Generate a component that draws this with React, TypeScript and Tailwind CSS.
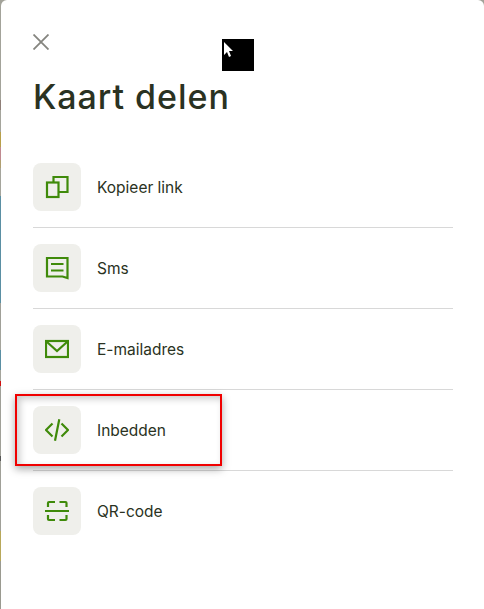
import React from "react";

const G = "#3f8a0a";

const strip: [number, string][] = [
  [100, "#a3a39a"], [10, "#8f7f78"], [22, "#a5a59c"], [15, "#b8a04a"], [13, "#c08a90"], [8, "#b09f70"], [28, "#a5a59c"],
  [107, "#5a8fa3"], [27, "#a0a098"], [20, "#a5a59c"], [20, "#5a8fa3"], [11, "#a5a59c"], [5, "#d01010"], [70, "#a0a098"],
  [5, "#555555"], [70, "#a0a098"], [30, "#b8a85a"], [48, "#9a9a90"],
];

const CopyIcon = () => (
  <svg width="24" height="24" viewBox="0 0 24 24" fill="none" stroke={G} strokeWidth="2.200">
    <rect x="2" y="7.500" width="11.500" height="14.500" />
    <path d="M8.500 7V2H22.500v15h-9" />
  </svg>
);
const SmsIcon = () => (
  <svg width="24" height="24" viewBox="0 0 24 24" fill="none" stroke={G} strokeWidth="2.200">
    <path d="M2 2h20.500v20l-5-1.500H2z" />
    <path d="M6 8h12.500M6 14.500h12.500" />
  </svg>
);
const MailIcon = () => (
  <svg width="24" height="24" viewBox="0 0 24 24" fill="none" stroke={G} strokeWidth="2.200">
    <rect x="1" y="4" width="22" height="16" />
    <path d="M2 5l10 9 10-9" />
  </svg>
);
const CodeIcon = () => (
  <svg width="24" height="24" viewBox="0 0 24 24" fill="none" stroke={G} strokeWidth="2.200">
    <path d="M7.500 5.500L1 12l6.500 6.500M16.500 5.500L23 12l-6.500 6.500M14.300 1.300L10 22.700" />
  </svg>
);
const QrIcon = () => (
  <svg width="24" height="24" viewBox="0 0 24 24" fill="none" stroke={G} strokeWidth="2.200">
    <path d="M3 8V4a1 1 0 0 1 1-1H10M14.500 3H20.500a1 1 0 0 1 1 1V8M0 12h24M3 16v4a1 1 0 0 0 1 1H10M14.500 21H20.500a1 1 0 0 0 1-1V16" />
  </svg>
);

const rows: [string, React.ReactNode][] = [
  ["Kopieer link", <CopyIcon />],
  ["Sms", <SmsIcon />],
  ["E-mailadres", <MailIcon />],
  ["Inbedden", <CodeIcon />],
  ["QR-code", <QrIcon />],
];

export default function App() {
  return (
    <div className="relative flex h-[609px] w-[484px] overflow-hidden bg-[#a3a39a] font-['Inter',sans-serif]">
      <div className="flex w-px flex-col">
        {strip.map(([h, c], i) => (
          <div key={i} style={{ height: h, background: c }} />
        ))}
      </div>
      <div className="flex-1 rounded-t-md bg-white pl-8 pr-[31px] pt-[34px]">
        <svg width="16" height="16" viewBox="0 0 16 16" fill="none" stroke="#85857f" strokeWidth="1.800">
          <path d="M0.500 0.500l15 15M15.500 0.500l-15 15" />
        </svg>
        <h1 className="mt-[25px] text-[34px] leading-[44px] font-medium tracking-[0.95px] text-[#2a3222]">Kaart delen</h1>
        <div className="mt-7">
          {rows.map(([label, icon], i) => (
            <div key={label} className={`flex items-center gap-4 py-4 ${i < 4 ? "border-b border-[#d8d8d8]" : ""}`}>
              <div className="flex h-12 w-12 items-center justify-center rounded-lg bg-[#efefeb]">{icon}</div>
              <span className="pt-0.5 text-[15.500px] text-[#2a3222]">{label}</span>
            </div>
          ))}
        </div>
      </div>
      <div className="absolute left-[222px] top-[39px] h-8 w-8 bg-black">
        <svg width="12" height="16" viewBox="0 0 12 16" className="absolute left-[1px] top-[3px]">
          <path d="M1 0v13l3-3 2 5 2-1-2-5h4z" fill="#fff" />
        </svg>
      </div>
      <div className="absolute left-[15px] top-[394px] h-[72px] w-[207px] border-2 border-[#f00000] shadow-[0_3px_8px_rgba(0,0,0,0.35),inset_3px_3px_7px_rgba(0,0,0,0.2)]" />
    </div>
  );
}
